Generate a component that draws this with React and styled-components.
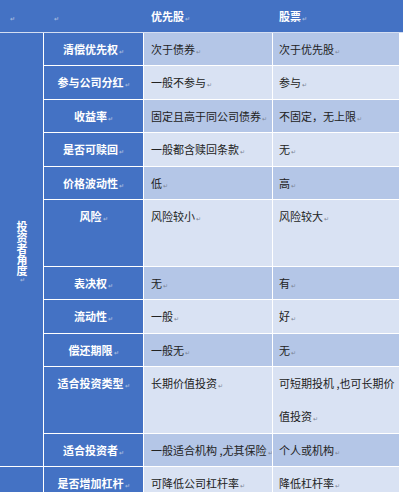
import React from "react";
import styled, { createGlobalStyle } from "styled-components";

const GlobalStyle = createGlobalStyle`
	html, body {
		margin: 0;
		padding: 0;
		background: #ffffff;
	}
	body {
		font-family: "Noto Sans CJK SC", "Noto Sans", sans-serif;
		overflow: hidden;
	}
`;

const COLS = "43px 99px 128px 126px";
const UNIT = 32.4;

const rows = [
	{ label: "清偿优先权", a: "次于债券", b: "次于优先股" },
	{ label: "参与公司分红", a: "一般不参与", b: "参与" },
	{ label: "收益率", a: "固定且高于同公司债券", b: "不固定，无上限" },
	{ label: "是否可赎回", a: "一般都含赎回条款", b: "无" },
	{ label: "价格波动性", a: "低", b: "高" },
	{ label: "风险", a: "风险较小", b: "风险较大", span: 2 },
	{ label: "表决权", a: "无", b: "有" },
	{ label: "流动性", a: "一般", b: "好" },
	{ label: "偿还期限", a: "一般无", b: "无" },
	{
		label: "适合投资类型",
		a: "长期价值投资",
		b: (
			<>
				可短期投机 ,也可长期价
				<br />
				值投资
			</>
		),
		span: 2,
	},
	{ label: "适合投资者", a: "一般适合机构 ,尤其保险", b: "个人或机构" },
];

const Page = styled.div`
	width: 403px;
	height: 492px;
	overflow: hidden;
	background: #ffffff;
`;

const HeaderBar = styled.div`
	display: grid;
	grid-template-columns: ${COLS};
	column-gap: 1px;
	height: 32px;
	background: #4472c4;
	border-bottom: 1px solid #d4def2;
`;

const HeadCell = styled.div`
	color: #ffffff;
	font-size: 11px;
	font-weight: 700;
	line-height: 32px;
	padding-left: ${(p) => p.$pad || 6}px;
	white-space: nowrap;
`;

const Body = styled.div`
	display: grid;
	grid-template-columns: ${COLS};
	gap: 1px;
	width: 399px;
	background: #ffffff;
	border-right: 1px solid #ffffff;
`;

const SideCell = styled.div`
	grid-column: 1;
	grid-row: ${(p) => p.$row};
	background: #4472c4;
	display: flex;
	align-items: center;
	justify-content: center;
`;

const SideText = styled.span`
	writing-mode: vertical-rl;
	text-orientation: upright;
	color: #ffffff;
	font-size: 11px;
	font-weight: 700;
	line-height: 1;
	padding-top: 4px;
`;

const Label = styled.div`
	background: #4472c4;
	color: #ffffff;
	font-size: 11px;
	font-weight: 700;
	text-align: center;
	line-height: ${UNIT + 1}px;
	height: ${(p) => p.$span * UNIT + (p.$span - 1)}px;
	white-space: nowrap;
`;

const Data = styled.div`
	background: ${(p) => (p.$dark ? "#b4c6e7" : "#d9e2f3")};
	color: #222222;
	font-size: 11px;
	line-height: ${UNIT + 1}px;
	padding-left: ${(p) => p.$pad}px;
	height: ${(p) => p.$span * UNIT + (p.$span - 1)}px;
	white-space: nowrap;
	overflow: hidden;
`;

const Mark = styled.span`
	font-size: 6px;
	color: ${(p) => (p.$light ? "#9fb3dc" : "#7b8494")};
	margin-left: 1px;
	vertical-align: baseline;
`;

export default function App() {
	return (
		<>
			<GlobalStyle />
			<Page>
				<HeaderBar>
					<HeadCell $pad={9}>
						<Mark $light>↵</Mark>
					</HeadCell>
					<HeadCell $pad={9}>
						<Mark $light>↵</Mark>
					</HeadCell>
					<HeadCell $pad={7}>
						优先股<Mark $light>↵</Mark>
					</HeadCell>
					<HeadCell $pad={6}>
						股票<Mark $light>↵</Mark>
					</HeadCell>
				</HeaderBar>
				<Body>
					<SideCell $row={`1 / span ${rows.length}`}>
						<SideText>
							投资者角度<Mark $light>↵</Mark>
						</SideText>
					</SideCell>
					{rows.map((r, i) => (
						<React.Fragment key={i}>
							<Label $span={r.span || 1} style={{ gridRow: i + 1 }}>
								{r.label}
								<Mark $light>↵</Mark>
							</Label>
							<Data $dark={i % 2 === 0} $pad={7} $span={r.span || 1}>
								{r.a}
								<Mark>↵</Mark>
							</Data>
							<Data $dark={i % 2 === 0} $pad={6} $span={r.span || 1}>
								{r.b}
								<Mark>↵</Mark>
							</Data>
						</React.Fragment>
					))}
					<SideCell $row={rows.length + 1} />
					<Label $span={1}>
						是否增加杠杆
						<Mark $light>↵</Mark>
					</Label>
					<Data $pad={7} $span={1}>
						可降低公司杠杆率
						<Mark>↵</Mark>
					</Data>
					<Data $pad={6} $span={1}>
						降低杠杆率
						<Mark>↵</Mark>
					</Data>
				</Body>
			</Page>
		</>
	);
}
